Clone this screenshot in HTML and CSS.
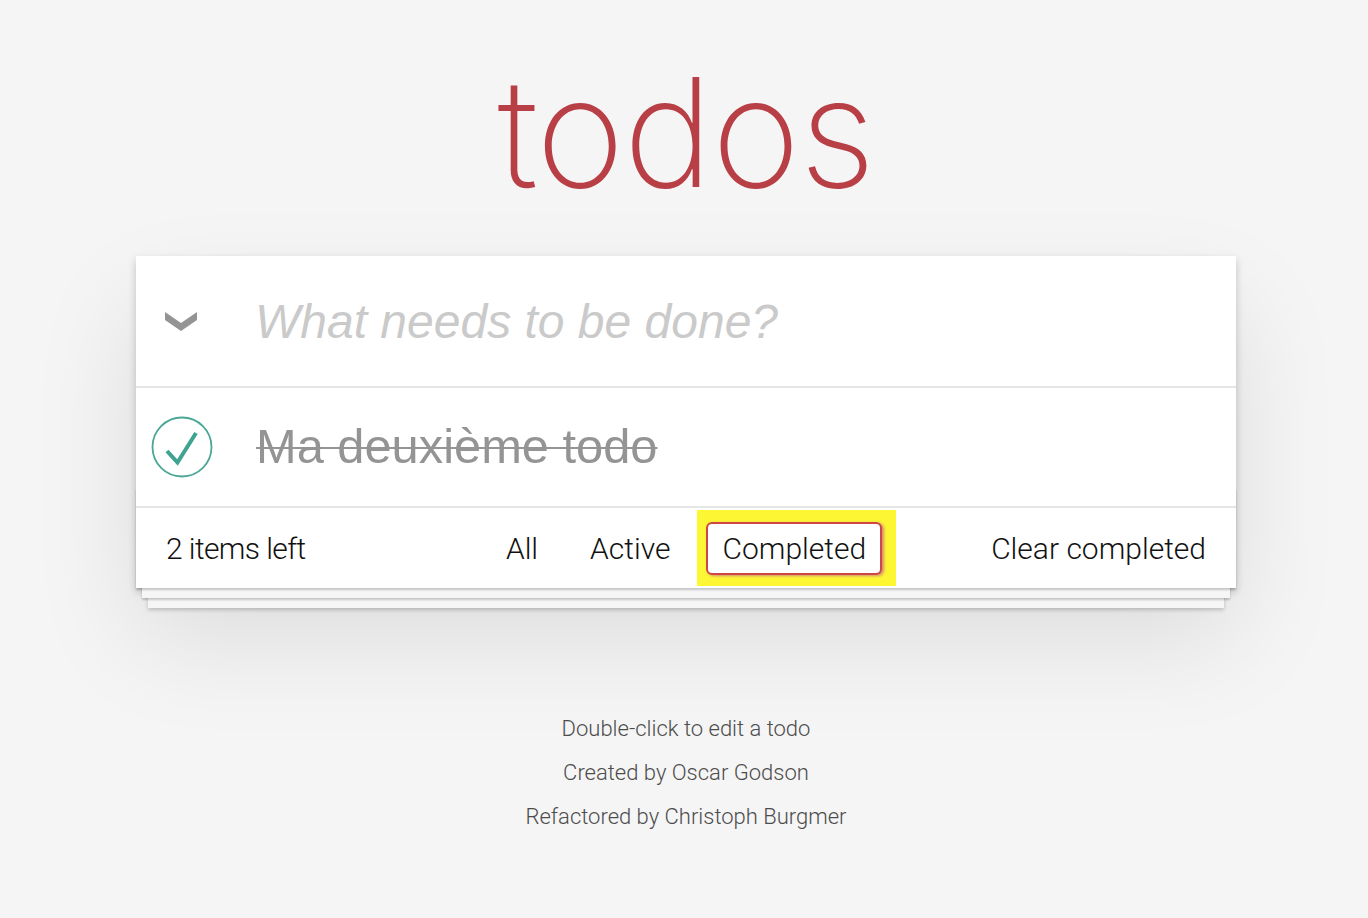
FILE: index.html
```html
<!DOCTYPE html>
<html lang="fr">
<head>
<meta charset="utf-8">
<title>Todos</title>
<link rel="stylesheet" href="styles.css">
</head>
<body>
<h1 class="title">todos</h1>
<section class="todoapp">
  <header class="header">
    <label class="toggle-all" aria-label="Mark all as complete">
      <svg class="chevron" width="32" height="22" viewBox="0 0 32 22"><polygon points="0,2 16,13 32,2 32,10 16,21 0,10" fill="#949494"/></svg>
    </label>
    <input class="new-todo" placeholder="What needs to be done?">
  </header>
  <ul class="todo-list">
    <li class="todo completed">
      <span class="toggle">
        <svg width="64" height="64" viewBox="0 0 64 64"><circle cx="32" cy="32" r="29.5" fill="none" stroke="#4aa796" stroke-width="1.8"/><polyline points="17,36 27.5,47.5 46,18" fill="none" stroke="#3ea390" stroke-width="4"/></svg>
      </span>
      <label class="todo-label">Ma deuxième todo</label>
    </li>
  </ul>
  <footer class="footer">
    <span class="todo-count">2 items left</span>
    <ul class="filters">
      <li><a class="filter" href="#/">All</a></li>
      <li><a class="filter" href="#/active">Active</a></li>
      <li><a class="filter selected" href="#/completed">Completed</a></li>
    </ul>
    <button class="clear-completed">Clear completed</button>
  </footer>
</section>
<footer class="info">
  <p>Double-click to edit a todo</p>
  <p>Created by Oscar Godson</p>
  <p>Refactored by Christoph Burgmer</p>
</footer>
</body>
</html>
```
FILE: styles.css
```css
* { box-sizing: border-box; }
html, body { margin: 0; padding: 0; }
body {
  padding-left: 4px;
  background: #f5f5f5;
  color: #111;
  font-family: Roboto, "Liberation Sans", sans-serif;
  font-weight: 300;
}
.title {
  margin: 55px 0 0;
  height: 154px;
  line-height: 154px;
  text-align: center;
  font-family: Inter, Roboto, sans-serif;
  font-weight: 200;
  font-size: 151px;
  letter-spacing: -1px;
  color: #b83f45;
}
.todoapp {
  width: 1100px;
  margin: 47px auto 0;
  background: #fff;
  box-shadow: 0 4px 8px 0 rgba(0,0,0,0.2), 0 50px 100px 0 rgba(0,0,0,0.1);
}
.header {
  display: flex;
  align-items: center;
  height: 130px;
}
.toggle-all {
  width: 90px;
  flex: none;
  display: flex;
  justify-content: center;
  align-items: center;
}
.chevron { display: block; }
.new-todo {
  flex: 1;
  height: 130px;
  border: none;
  outline: none;
  background: transparent;
  padding: 0 30px 0 29px;
  font-family: "Liberation Sans", Arial, sans-serif;
  font-size: 48px;
  color: #4d4d4d;
}
.new-todo::placeholder {
  font-style: italic;
  color: #cacaca;
}
.todo-list {
  list-style: none;
  margin: 0;
  padding: 0;
  border-top: 2px solid #e6e6e6;
}
.todo {
  display: flex;
  align-items: center;
  height: 118px;
}
.toggle {
  width: 120px;
  flex: none;
  display: flex;
  padding-left: 14px;
}
.toggle svg { display: block; }
.todo-label {
  font-family: "Liberation Sans", Arial, sans-serif;
  font-size: 48.8px;
  font-weight: 400;
  line-height: 57.6px;
  color: #949494;
  text-decoration: line-through;
  text-decoration-thickness: 2px;
}
.footer {
  position: relative;
  display: grid;
  grid-template-columns: 1fr auto 1fr;
  align-items: center;
  height: 82px;
  padding: 0 30px;
  border-top: 2px solid #e6e6e6;
  font-size: 30px;
  color: #111;
}
.footer::before {
  content: "";
  position: absolute;
  left: 0;
  right: 0;
  bottom: 0;
  height: 100px;
  pointer-events: none;
  box-shadow: 0 2px 2px rgba(0,0,0,0.2),
              0 16px 0 -6px #f6f6f6,
              0 18px 2px -6px rgba(0,0,0,0.2),
              0 32px 0 -12px #f6f6f6,
              0 34px 4px -12px rgba(0,0,0,0.2);
}
.todo-count {
  justify-self: start;
  position: relative;
  letter-spacing: -0.6px;
}
.filters {
  list-style: none;
  margin: 0;
  padding: 0;
  display: flex;
  gap: 8px;
  position: relative;
  z-index: 1;
}
.filter {
  position: relative;
  display: inline-block;
  margin: 6px;
  padding: 6px 14px;
  line-height: 37px;
  border: 2px solid transparent;
  border-radius: 6px;
  color: inherit;
  text-decoration: none;
  background: #fff;
}
.filter.selected {
  border-color: #ce4646;
  box-shadow: 2px 1px 3px 0 rgba(207,125,125,0.9);
}
.filter.selected::before {
  content: "";
  position: absolute;
  left: -11px;
  right: -16px;
  top: -14px;
  bottom: -13px;
  z-index: -1;
  background: #fdf733;
}
.clear-completed {
  justify-self: end;
  position: relative;
  border: none;
  background: none;
  padding: 0;
  font: inherit;
  color: inherit;
}
.info {
  margin: 130px auto 0;
  text-align: center;
  color: #4d4d4d;
  font-size: 22px;
}
.info p { margin: 22px 0; line-height: 1; }
```
